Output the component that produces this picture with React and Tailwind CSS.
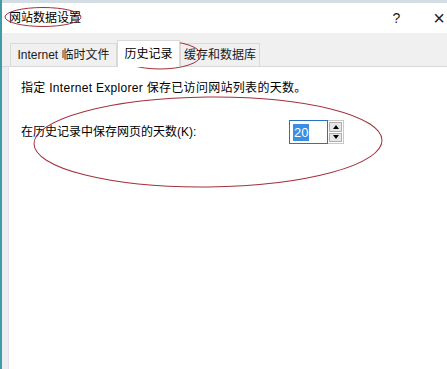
import React from 'react';

const FONT = { fontFamily: '"Liberation Sans", "Noto Sans CJK SC", sans-serif' };

function Tab({ label, active, width }) {
  if (active) {
    return (
      <div className={`relative z-10 -mb-px h-[27px] ${width} flex items-center justify-center bg-white border border-b-0 border-[#d9d9d9] text-[12px] text-black`}>
        {label}
      </div>
    );
  }
  return (
    <div className={`h-[23px] ${width} flex items-center justify-center bg-[#f0f0f0] border border-b-0 border-[#d9d9d9] text-[12px] text-[#1a1a1a]`}>
      {label}
    </div>
  );
}

function Spinner({ value }) {
  return (
    <div className="flex h-[24px]">
      <div className="w-[39px] h-full border border-[#2f6fbf] bg-white flex items-center pl-[3px]">
        <span className="bg-[#3a8ee6] text-white text-[13px] leading-[17px] px-[1px]">{value}</span>
      </div>
      <div className="w-[16px] h-full flex flex-col border border-l-0 border-[#c8c8c8] bg-white p-px gap-px">
        <button className="flex-1 flex items-center justify-center bg-[#e6e6e6] border border-[#adadad]">
          <span className="w-0 h-0 border-x-[3px] border-x-transparent border-b-[4px] border-b-black"></span>
        </button>
        <button className="flex-1 flex items-center justify-center bg-[#e6e6e6] border border-[#adadad]">
          <span className="w-0 h-0 border-x-[3px] border-x-transparent border-t-[4px] border-t-black"></span>
        </button>
      </div>
    </div>
  );
}

export default function App() {
  return (
    <div className="relative w-[447px] h-[369px] overflow-hidden bg-white border-l-2 border-[#3f9ba7] flex flex-col" style={FONT}>
      {/* title bar */}
      <div className="border-t-[3px] border-[#d3dde3] h-[33px] flex items-center pl-[7px] pr-[2px] text-[12px] text-black">
        <span>网站数据设置</span>
        <span className="ml-auto text-[14px] text-[#222]">?</span>
        <span className="ml-[33px] text-[20px] font-light text-[#222] leading-none">×</span>
      </div>

      {/* tab strip */}
      <div className="h-[34px] bg-[#f0f0f0] border-b border-[#d9d9d9] flex items-end pl-[8px]">
        <Tab label="Internet 临时文件" width="w-[107px]" />
        <Tab label="历史记录" width="w-[63px]" active />
        <Tab label="缓存和数据库" width="w-[80px]" />
      </div>

      {/* content */}
      <div className="flex-1 flex">
        <div className="w-[6px] bg-[#ebefef]"></div>
        <div className="flex-1 bg-white border-l border-[#e6dfe8] pl-[12px] pt-[13px] text-[12px] text-black">
          <p className="leading-[16px] tracking-[0.3px]">指定 Internet Explorer 保存已访问网站列表的天数。</p>
          <div className="mt-[24px] flex items-center">
            <span className="w-[268px]">在历史记录中保存网页的天数(K):</span>
            <Spinner value="20" />
          </div>
        </div>
      </div>

      {/* red annotation circles */}
      <svg className="absolute inset-0 pointer-events-none" width="447" height="369" viewBox="0 0 447 369">
        <g fill="none" stroke="#a3303c" strokeWidth="1">
          <ellipse cx="41" cy="17" rx="38" ry="9.5" />
          <ellipse cx="158" cy="55" rx="41" ry="14" />
          <ellipse cx="206" cy="142" rx="174" ry="45" transform="rotate(-0.6 206 142)" />
        </g>
      </svg>
    </div>
  );
}
